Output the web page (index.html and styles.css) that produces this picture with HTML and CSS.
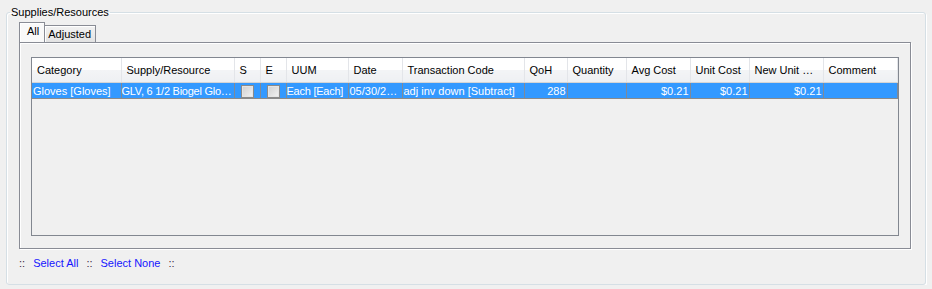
FILE: index.html
```html
<!DOCTYPE html>
<html lang="en">
  <head>
    <meta charset="utf-8" />
    <title>Supplies/Resources</title>
    <link rel="stylesheet" href="styles.css">
  </head>
  <body>
    <fieldset class="group">
      <legend>Supplies/Resources</legend>

      <!-- tab strip -->
      <div class="tabs">
        <span class="tab active">All</span>
        <span class="tab">Adjusted</span>
      </div>

      <div class="panel">
        <div class="grid">
          <table>
            <colgroup>
              <col style="width: 89px">
              <col style="width: 113px">
              <col style="width: 26px">
              <col style="width: 26px">
              <col style="width: 62px">
              <col style="width: 54px">
              <col style="width: 122px">
              <col style="width: 43px">
              <col style="width: 59px">
              <col style="width: 64px">
              <col style="width: 59px">
              <col style="width: 74px">
              <col style="width: 74px">
            </colgroup>
            <thead>
              <tr>
                <th>Category</th>
                <th>Supply/Resource</th>
                <th>S</th>
                <th>E</th>
                <th>UUM</th>
                <th>Date</th>
                <th>Transaction Code</th>
                <th>QoH</th>
                <th>Quantity</th>
                <th>Avg Cost</th>
                <th>Unit Cost</th>
                <th>New Unit …</th>
                <th>Comment</th>
              </tr>
            </thead>
            <tbody>
              <tr class="selected">
                <td>Gloves [Gloves]</td>
                <td class="tight">GLV, 6 1/2 Biogel Glo…</td>
                <td class="check"><span class="box"></span></td>
                <td class="check"><span class="box"></span></td>
                <td class="tight">Each [Each]</td>
                <td>05/30/2…</td>
                <td>adj inv down [Subtract]</td>
                <td class="num">288</td>
                <td></td>
                <td class="num">$0.21</td>
                <td class="num">$0.21</td>
                <td class="num">$0.21</td>
                <td></td>
              </tr>
            </tbody>
          </table>
        </div>
      </div>

      <div class="links">
        <span class="sep">::</span>
        <a href="#">Select All</a>
        <span class="sep">::</span>
        <a href="#">Select None</a>
        <span class="sep">::</span>
      </div>
    </fieldset>
  </body>
</html>
```

FILE: styles.css
```css
body {
  margin: 0;
  padding-top: 5px;
  background-color: #f0f0f0;
  font-family: "Liberation Sans", Arial, sans-serif;
  font-size: 11px;
  color: #000;
}

.group {
  width: 889px;
  height: 275px;
  margin: 0 0 0 6px;
  padding: 3px 14px 0 12px;
  border: 1px solid #d5dfe5;
  border-radius: 3px;
  box-shadow: inset 1px 1px 0 #fff, 1px 1px 0 #fff;
}

.group legend {
  margin-left: -9px;
  padding: 0 1px;
  line-height: 14px;
}

/* tabs */
.tabs {
  display: flex;
  align-items: flex-end;
  height: 20px;
  position: relative;
  z-index: 1;
}

.tab {
  height: 16px;
  line-height: 16px;
  padding: 0 4px 0 3px;
  border: 1px solid #898c95;
  border-bottom: none;
  background: linear-gradient(#f2f2f2, #e3e3e3);
  box-shadow: inset 1px 1px 0 #fff;
}

.tab.active {
  height: 19px;
  line-height: 17px;
  padding: 0 5px 0 7px;
  margin-right: -1px;
  background: #f9f9f9;
  box-shadow: inset 1px 1px 0 #fff;
}

.panel {
  height: 179px;
  padding: 14px 11px 12px 11px;
  border: 1px solid #898c95;
  box-shadow: inset 1px 1px 0 #fff, 1px 1px 0 #fff;
}

/* grid */
.grid {
  height: 177px;
  border: 1px solid #828790;
  background-color: #f0f0f0;
}

.grid table {
  table-layout: fixed;
  width: 865px;
  border-collapse: collapse;
}

.grid th {
  height: 24px;
  padding: 0 0 0 5px;
  text-align: left;
  font-weight: normal;
  white-space: nowrap;
  overflow: hidden;
  background: linear-gradient(#ffffff, #ffffff 50%, #f3f4f6 50%, #eef0f3);
  border-right: 1px solid #e3e5e9;
  border-bottom: 1px solid #d5d5d5;
}

.grid td {
  height: 15px;
  padding: 0 1px 0 1px;
  white-space: nowrap;
  overflow: hidden;
  border-right: 1px solid #7f8a99;
  border-bottom: 1px solid #8a8a8a;
}

.grid td.tight {
  padding: 0;
  letter-spacing: -0.25px;
}

.grid tr.selected td {
  background-color: #3399ff;
  color: #fff;
}

.grid td.num {
  text-align: right;
}

.grid td.check {
  text-align: center;
}

.box {
  display: inline-block;
  width: 11px;
  height: 11px;
  margin-top: 2px;
  vertical-align: top;
  border: 1px solid #8a8a8a;
  background: linear-gradient(135deg, #cfcfcf, #f2f2f2);
  box-shadow: inset 0 0 0 1px #e4e4e4;
}

/* select links */
.links {
  padding: 7px 0 0 0;
  display: flex;
  gap: 8px;
  line-height: 14px;
}

.links .sep {
  color: #3a2a40;
}

.links a {
  color: #1515ff;
  text-decoration: none;
}
```
